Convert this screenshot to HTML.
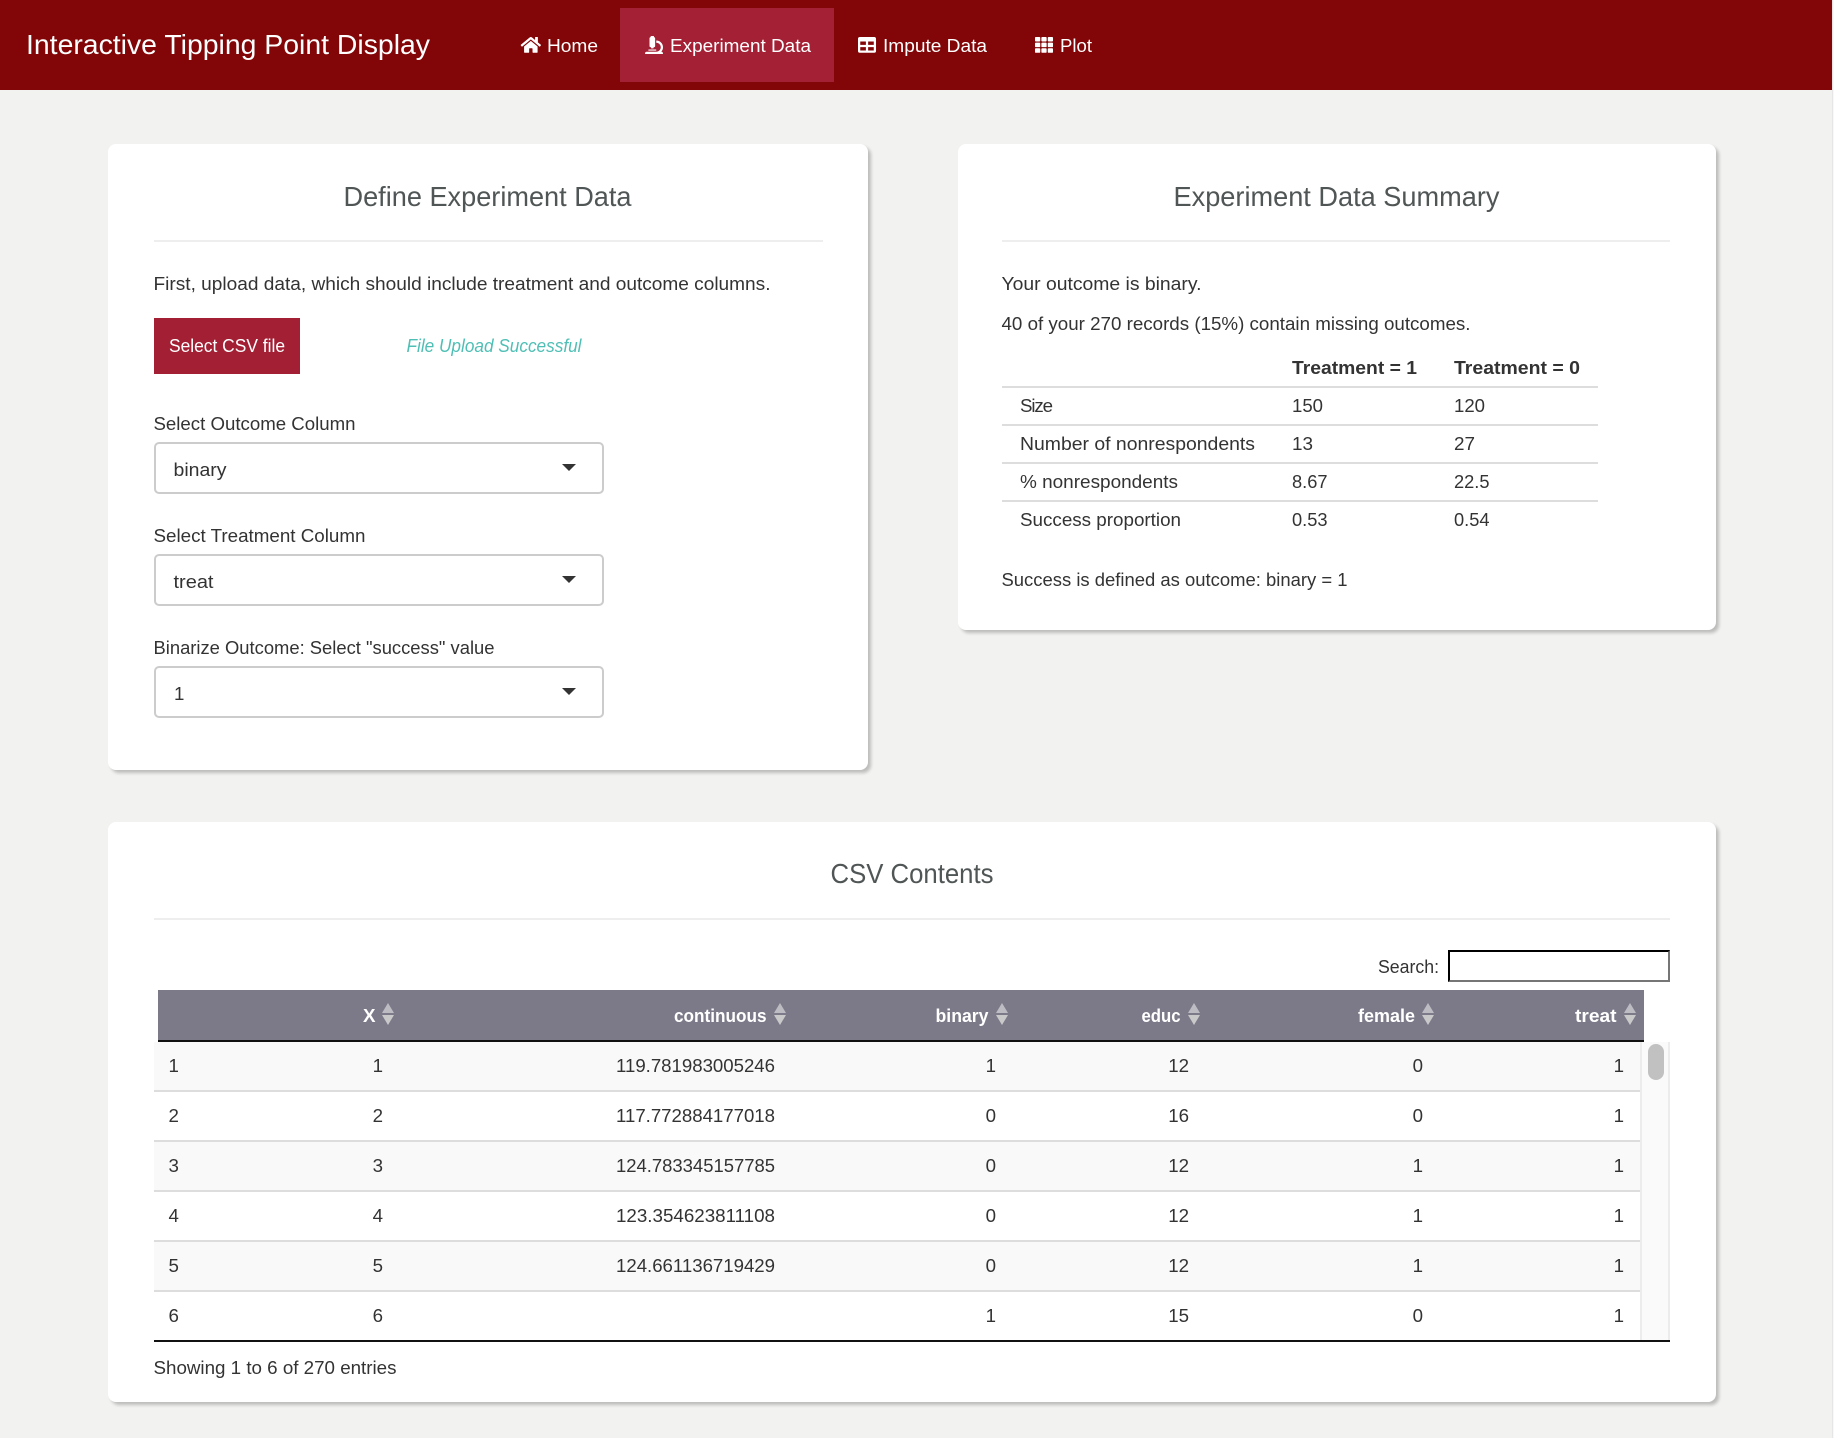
<!DOCTYPE html>
<html lang="en">
<head>
<meta charset="utf-8">
<title>Interactive Tipping Point Display</title>
<style>
html,body{margin:0;padding:0;width:1834px;height:1438px;overflow:hidden;background:#f2f2f0;}
body{position:relative;font-family:"Liberation Sans",sans-serif;}
.strip{position:absolute;left:1832px;top:0;width:2px;height:1438px;background:#f8f8f8;border-left:1px solid #e6e6e6;box-sizing:border-box;}
.nav{position:absolute;left:0;top:0;width:1832px;height:90px;background:#820507;}
.active{position:absolute;left:620px;top:8px;width:214px;height:74px;background:#a32035;}
.panel{position:absolute;background:#fff;border-radius:8px;box-shadow:3px 3px 3px rgba(0,0,0,.22);}
.p1{left:108px;top:144px;width:760px;height:626px;}
.p2{left:958px;top:144px;width:758px;height:486px;}
.p3{left:108px;top:822px;width:1608px;height:580px;}
.hr{position:absolute;height:2px;background:#eee;top:240px;}
.btn{position:absolute;left:154px;top:318px;width:146px;height:56px;background:#a31f34;}
.sel{position:absolute;left:154px;width:450px;height:52px;box-sizing:border-box;background:#fff;border:2px solid #ccc;border-radius:5px;}
.search{position:absolute;left:1448px;top:950px;width:222px;height:32px;box-sizing:border-box;border:2px inset #767676;border-color:#222 #767676 #767676 #222;background:#fff;}
.thead{position:absolute;left:158px;top:990px;width:1486px;height:50px;background:#7c7a89;border-bottom:2px solid #111;}
.row{position:absolute;left:154px;width:1486px;height:50px;box-sizing:border-box;border-bottom:2px solid #ddd;}
.odd{background:#f9f9f9;}
.even{background:#fff;}
.track{position:absolute;left:1640px;top:1042px;width:30px;height:298px;box-sizing:border-box;background:#fafafa;border-left:2px solid #ececec;border-right:2px solid #ececec;}
.thumb{position:absolute;left:1648px;top:1044px;width:16px;height:36px;border-radius:8px;background:#c1c1c1;}
.foot{position:absolute;left:154px;top:1340px;width:1516px;height:2px;background:#111;}
svg.o{position:absolute;left:0;top:0;}
svg text{font-family:"Liberation Sans",sans-serif;font-size:18.7px;fill:#333;}
svg text.w{fill:#fff;}
svg text.t{font-size:28px;fill:#505555;}
svg text.b{font-weight:bold;}
</style>
</head>
<body>
<div class="strip"></div>
<div class="nav"></div>
<div class="active"></div>
<div class="panel p1"></div>
<div class="panel p2"></div>
<div class="panel p3"></div>
<div class="hr" style="left:154px;width:669px"></div>
<div class="hr" style="left:1002px;width:668px"></div>
<div class="hr" style="left:154px;width:1516px;top:918px"></div>
<div class="btn"></div>
<div class="sel" style="top:442px"></div>
<div class="sel" style="top:554px"></div>
<div class="sel" style="top:666px"></div>
<div class="search"></div>
<div class="thead"></div>
<div class="row odd" style="top:1042px"></div>
<div class="row even" style="top:1092px"></div>
<div class="row odd" style="top:1142px"></div>
<div class="row even" style="top:1192px"></div>
<div class="row odd" style="top:1242px"></div>
<div class="row even" style="top:1292px;height:48px;border:0"></div>
<div class="track"></div>
<div class="thumb"></div>
<div class="foot"></div>

<svg class="o" width="1834" height="1438" viewBox="0 0 1834 1438" xmlns="http://www.w3.org/2000/svg">
<!-- navbar -->
<text class="w" x="26" y="54" style="font-size:28px" textLength="404" lengthAdjust="spacingAndGlyphs">Interactive Tipping Point Display</text>
<g fill="#fff">
<path transform="translate(520.7,35.9) scale(.0352)" d="M280.37 148.26L96 300.11V464a16 16 0 0 0 16 16l112.06-.29a16 16 0 0 0 15.92-16V368a16 16 0 0 1 16-16h64a16 16 0 0 1 16 16v95.64a16 16 0 0 0 16 16.05L464 480a16 16 0 0 0 16-16V300L295.67 148.26a12.19 12.19 0 0 0-15.3 0zM571.6 251.47L488 182.56V44.05a12 12 0 0 0-12-12h-56a12 12 0 0 0-12 12v72.61L318.47 43a48 48 0 0 0-61 0L4.34 251.47a12 12 0 0 0-1.6 16.9l25.5 31A12 12 0 0 0 45.15 301l235.22-193.74a12.19 12.19 0 0 1 15.3 0L530.9 301a12 12 0 0 0 16.9-1.6l25.5-31a12 12 0 0 0-1.7-16.93z"/>
<path transform="translate(645,36) scale(.0352)" d="M160 320h12v16c0 8.84 7.16 16 16 16h40c8.84 0 16-7.16 16-16v-16h12c17.67 0 32-14.33 32-32V64c0-17.67-14.33-32-32-32V16c0-8.84-7.16-16-16-16h-64c-8.84 0-16 7.16-16 16v16c-17.67 0-32 14.33-32 32v224c0 17.67 14.33 32 32 32zm304 128h-1.29C493.24 413.99 512 369.2 512 320c0-105.88-86.12-192-192-192v64c70.58 0 128 57.42 128 128s-57.42 128-128 128H48c-26.51 0-48 21.49-48 48 0 8.84 7.16 16 16 16h480c8.84 0 16-7.16 16-16 0-26.51-21.49-48-48-48zm-360-32h208c4.42 0 8-3.58 8-8v-16c0-4.42-3.58-8-8-8H104c-4.42 0-8 3.58-8 8v16c0 4.42 3.58 8 8 8z"/>
<path transform="translate(858,35.9) scale(.0352)" d="M464 32H48C21.49 32 0 53.49 0 80v352c0 26.51 21.49 48 48 48h416c26.51 0 48-21.49 48-48V80c0-26.51-21.49-48-48-48zM224 416H64v-96h160v96zm0-160H64v-96h160v96zm224 160H288v-96h160v96zm0-160H288v-96h160v96z"/>
<path transform="translate(1035,35.9) scale(.0352)" d="M149.333 56v80c0 13.255-10.745 24-24 24H24c-13.255 0-24-10.745-24-24V56c0-13.255 10.745-24 24-24h101.333c13.255 0 24 10.745 24 24zm181.334 240v-80c0-13.255-10.745-24-24-24H205.333c-13.255 0-24 10.745-24 24v80c0 13.255 10.745 24 24 24h101.333c13.256 0 24.001-10.745 24.001-24zm32-240v80c0 13.255 10.745 24 24 24H488c13.255 0 24-10.745 24-24V56c0-13.255-10.745-24-24-24H387.333c-13.255 0-24 10.745-24 24zm-32 80V56c0-13.255-10.745-24-24-24H205.333c-13.255 0-24 10.745-24 24v80c0 13.255 10.745 24 24 24h101.333c13.256 0 24.001-10.745 24.001-24zm-205.334 56H24c-13.255 0-24 10.745-24 24v80c0 13.255 10.745 24 24 24h101.333c13.255 0 24-10.745 24-24v-80c0-13.255-10.745-24-24-24zM0 376v80c0 13.255 10.745 24 24 24h101.333c13.255 0 24-10.745 24-24v-80c0-13.255-10.745-24-24-24H24c-13.255 0-24 10.745-24 24zm386.667-56H488c13.255 0 24-10.745 24-24v-80c0-13.255-10.745-24-24-24H386.667c-13.255 0-24 10.745-24 24v80c0 13.255 10.745 24 24 24zm0 160H488c13.255 0 24-10.745 24-24v-80c0-13.255-10.745-24-24-24H386.667c-13.255 0-24 10.745-24 24v80c0 13.255 10.745 24 24 24zM181.333 376v80c0 13.255 10.745 24 24 24h101.333c13.255 0 24-10.745 24-24v-80c0-13.255-10.745-24-24-24H205.333c-13.255 0-24 10.745-24 24z"/>
</g>
<text class="w" x="547" y="52" textLength="51" lengthAdjust="spacingAndGlyphs">Home</text>
<text class="w" x="670" y="52" textLength="141" lengthAdjust="spacingAndGlyphs">Experiment Data</text>
<text class="w" x="883" y="52" textLength="104" lengthAdjust="spacingAndGlyphs">Impute Data</text>
<text class="w" x="1060" y="52" textLength="32" lengthAdjust="spacingAndGlyphs">Plot</text>

<!-- left panel -->
<text class="t" x="343.5" y="206" textLength="288" lengthAdjust="spacingAndGlyphs">Define Experiment Data</text>
<text x="153.5" y="290" textLength="617" lengthAdjust="spacingAndGlyphs">First, upload data, which should include treatment and outcome columns.</text>
<text class="w" x="169" y="352" textLength="116" lengthAdjust="spacingAndGlyphs">Select CSV file</text>
<text x="406.5" y="352" textLength="175" lengthAdjust="spacingAndGlyphs" style="font-style:italic;fill:#4fbfb5">File Upload Successful</text>
<text x="153.5" y="430" textLength="202" lengthAdjust="spacingAndGlyphs">Select Outcome Column</text>
<text x="173.5" y="476" textLength="53" lengthAdjust="spacingAndGlyphs">binary</text>
<polygon points="562,464 576,464 569,471" fill="#333"/>
<text x="153.5" y="542" textLength="212" lengthAdjust="spacingAndGlyphs">Select Treatment Column</text>
<text x="173.5" y="588" textLength="40" lengthAdjust="spacingAndGlyphs">treat</text>
<polygon points="562,576 576,576 569,583" fill="#333"/>
<text x="153.5" y="654" textLength="341" lengthAdjust="spacingAndGlyphs">Binarize Outcome: Select "success" value</text>
<text x="174" y="700">1</text>
<polygon points="562,688 576,688 569,695" fill="#333"/>

<!-- right panel -->
<text class="t" x="1173.5" y="206" textLength="326" lengthAdjust="spacingAndGlyphs">Experiment Data Summary</text>
<text x="1001.5" y="290" textLength="200" lengthAdjust="spacingAndGlyphs">Your outcome is binary.</text>
<text x="1001.5" y="330" textLength="469" lengthAdjust="spacingAndGlyphs">40 of your 270 records (15%) contain missing outcomes.</text>
<text class="b" x="1292" y="374" textLength="125" lengthAdjust="spacingAndGlyphs">Treatment = 1</text>
<text class="b" x="1454" y="374" textLength="126" lengthAdjust="spacingAndGlyphs">Treatment = 0</text>
<rect x="1002" y="386" width="596" height="2" fill="#ddd"/>
<rect x="1002" y="424" width="596" height="2" fill="#ddd"/>
<rect x="1002" y="462" width="596" height="2" fill="#ddd"/>
<rect x="1002" y="500" width="596" height="2" fill="#ddd"/>
<text x="1020" y="412" textLength="33" lengthAdjust="spacing">Size</text>
<text x="1292" y="412" textLength="31" lengthAdjust="spacingAndGlyphs">150</text>
<text x="1454" y="412" textLength="31" lengthAdjust="spacingAndGlyphs">120</text>
<text x="1020" y="450" textLength="235" lengthAdjust="spacingAndGlyphs">Number of nonrespondents</text>
<text x="1292" y="450" textLength="21" lengthAdjust="spacingAndGlyphs">13</text>
<text x="1454" y="450" textLength="21" lengthAdjust="spacingAndGlyphs">27</text>
<text x="1020" y="488" textLength="158" lengthAdjust="spacingAndGlyphs">% nonrespondents</text>
<text x="1292" y="488" textLength="35.5" lengthAdjust="spacingAndGlyphs">8.67</text>
<text x="1454" y="488" textLength="35.5" lengthAdjust="spacingAndGlyphs">22.5</text>
<text x="1020" y="526" textLength="161" lengthAdjust="spacingAndGlyphs">Success proportion</text>
<text x="1292" y="526" textLength="35.5" lengthAdjust="spacingAndGlyphs">0.53</text>
<text x="1454" y="526" textLength="35.5" lengthAdjust="spacingAndGlyphs">0.54</text>
<text x="1001.5" y="586" textLength="346" lengthAdjust="spacingAndGlyphs">Success is defined as outcome: binary = 1</text>

<!-- csv panel -->
<text class="t" x="830.5" y="883" textLength="163" lengthAdjust="spacingAndGlyphs">CSV Contents</text>
<text x="1378" y="973" textLength="61" lengthAdjust="spacingAndGlyphs">Search:</text>

<text class="w b" x="363" y="1022" textLength="12.5" lengthAdjust="spacingAndGlyphs">X</text>
<text class="w b" x="674" y="1022" textLength="92.5" lengthAdjust="spacingAndGlyphs">continuous</text>
<text class="w b" x="935.5" y="1022" textLength="53" lengthAdjust="spacingAndGlyphs">binary</text>
<text class="w b" x="1141.5" y="1022" textLength="39" lengthAdjust="spacingAndGlyphs">educ</text>
<text class="w b" x="1358" y="1022" textLength="57" lengthAdjust="spacingAndGlyphs">female</text>
<text class="w b" x="1575" y="1022" textLength="41.5" lengthAdjust="spacingAndGlyphs">treat</text>
<g>
<g><polygon points="382,1013 394,1013 388,1003" fill="#bdbcc3"/><polygon points="382,1015 394,1015 388,1025" fill="#c9c9c9"/></g>
<g><polygon points="774,1013 786,1013 780,1003" fill="#bdbcc3"/><polygon points="774,1015 786,1015 780,1025" fill="#c9c9c9"/></g>
<g><polygon points="996,1013 1008,1013 1002,1003" fill="#bdbcc3"/><polygon points="996,1015 1008,1015 1002,1025" fill="#c9c9c9"/></g>
<g><polygon points="1188,1013 1200,1013 1194,1003" fill="#bdbcc3"/><polygon points="1188,1015 1200,1015 1194,1025" fill="#c9c9c9"/></g>
<g><polygon points="1422,1013 1434,1013 1428,1003" fill="#bdbcc3"/><polygon points="1422,1015 1434,1015 1428,1025" fill="#c9c9c9"/></g>
<g><polygon points="1624,1013 1636,1013 1630,1003" fill="#bdbcc3"/><polygon points="1624,1015 1636,1015 1630,1025" fill="#c9c9c9"/></g>
</g>

<g text-anchor="end">
<text x="383" y="1072">1</text><text x="775" y="1072" textLength="159" lengthAdjust="spacingAndGlyphs">119.781983005246</text><text x="996" y="1072">1</text><text x="1189" y="1072">12</text><text x="1423" y="1072">0</text><text x="1624" y="1072">1</text>
<text x="383" y="1122">2</text><text x="775" y="1122" textLength="159" lengthAdjust="spacingAndGlyphs">117.772884177018</text><text x="996" y="1122">0</text><text x="1189" y="1122">16</text><text x="1423" y="1122">0</text><text x="1624" y="1122">1</text>
<text x="383" y="1172">3</text><text x="775" y="1172" textLength="159" lengthAdjust="spacingAndGlyphs">124.783345157785</text><text x="996" y="1172">0</text><text x="1189" y="1172">12</text><text x="1423" y="1172">1</text><text x="1624" y="1172">1</text>
<text x="383" y="1222">4</text><text x="775" y="1222" textLength="159" lengthAdjust="spacingAndGlyphs">123.354623811108</text><text x="996" y="1222">0</text><text x="1189" y="1222">12</text><text x="1423" y="1222">1</text><text x="1624" y="1222">1</text>
<text x="383" y="1272">5</text><text x="775" y="1272" textLength="159" lengthAdjust="spacingAndGlyphs">124.661136719429</text><text x="996" y="1272">0</text><text x="1189" y="1272">12</text><text x="1423" y="1272">1</text><text x="1624" y="1272">1</text>
<text x="383" y="1322">6</text><text x="996" y="1322">1</text><text x="1189" y="1322">15</text><text x="1423" y="1322">0</text><text x="1624" y="1322">1</text>
</g>
<text x="168.5" y="1072">1</text>
<text x="168.5" y="1122">2</text>
<text x="168.5" y="1172">3</text>
<text x="168.5" y="1222">4</text>
<text x="168.5" y="1272">5</text>
<text x="168.5" y="1322">6</text>
<text x="153.5" y="1374" textLength="243" lengthAdjust="spacingAndGlyphs">Showing 1 to 6 of 270 entries</text>
</svg>
</body>
</html>
